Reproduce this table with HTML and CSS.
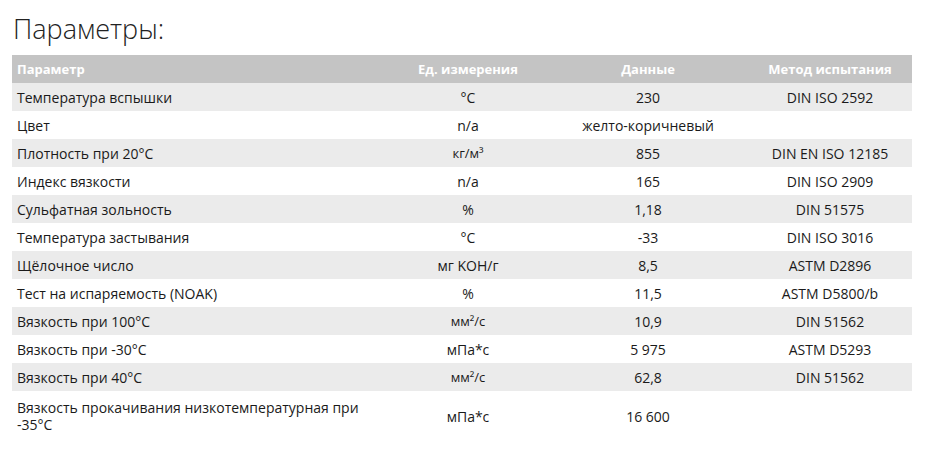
FILE: index.html
```html
<!DOCTYPE html>
<html lang="ru">
<head>
<meta charset="utf-8">
<link rel="stylesheet" href="styles.css">
</head>
<body>
<div class="page">
<h2 class="title">Параметры:</h2>
<table class="params">
<colgroup><col class="c1"><col class="c2"><col class="c3"><col class="c4"></colgroup>
<thead>
<tr><th class="left">Параметр</th><th>Ед. измерения</th><th>Данные</th><th>Метод испытания</th></tr>
</thead>
<tbody>
<tr><td class="left">Температура вспышки</td><td>°C</td><td>230</td><td>DIN ISO 2592</td></tr>
<tr><td class="left">Цвет</td><td>n/a</td><td>желто-коричневый</td><td></td></tr>
<tr><td class="left">Плотность при 20°C</td><td class="sm">кг/м³</td><td>855</td><td>DIN EN ISO 12185</td></tr>
<tr><td class="left">Индекс вязкости</td><td>n/a</td><td>165</td><td>DIN ISO 2909</td></tr>
<tr><td class="left">Сульфатная зольность</td><td>%</td><td>1,18</td><td>DIN 51575</td></tr>
<tr><td class="left">Температура застывания</td><td>°C</td><td>-33</td><td>DIN ISO 3016</td></tr>
<tr><td class="left">Щёлочное число</td><td>мг KOH/г</td><td>8,5</td><td>ASTM D2896</td></tr>
<tr><td class="left">Тест на испаряемость (NOAK)</td><td>%</td><td>11,5</td><td>ASTM D5800/b</td></tr>
<tr><td class="left">Вязкость при 100°C</td><td class="sm">мм²/с</td><td>10,9</td><td>DIN 51562</td></tr>
<tr><td class="left">Вязкость при -30°C</td><td>мПа*с</td><td>5 975</td><td>ASTM D5293</td></tr>
<tr><td class="left">Вязкость при 40°C</td><td class="sm">мм²/с</td><td>62,8</td><td>DIN 51562</td></tr>
<tr><td class="left">Вязкость прокачивания низкотемпературная при -35°C</td><td>мПа*с</td><td>16 600</td><td></td></tr>
</tbody>
</table>
</div>
</body>
</html>
```

FILE: styles.css
```css
html, body {
  margin: 0;
  padding: 0;
  background: #ffffff;
}
body {
  font-family: "Open Sans", "Liberation Sans", sans-serif;
  color: #1a1a1a;
}
.page {
  padding: 10px 20px 0 12px;
}
.title {
  margin: 0 0 8px 1px;
  font-weight: 300;
  font-size: 27px;
  line-height: 37px;
  color: #222222;
}
.params {
  width: 900px;
  border-collapse: collapse;
  table-layout: fixed;
  font-size: 14px;
}
.c1 { width: 376px; }
.c2 { width: 160px; }
.c3 { width: 200px; }
.c4 { width: 164px; }
.params th {
  background: #c4c4c4;
  color: #ffffff;
  font-weight: 700;
  font-size: 13px;
  height: 28px;
  padding: 0 5px;
  text-align: center;
}
.params td {
  height: 28px;
  padding: 0 5px;
  text-align: center;
  line-height: 17px;
}
.params .left {
  text-align: left;
}
.params tbody tr:nth-child(odd) td {
  background: #ebebeb;
}
.params tbody tr:last-child td {
  padding-top: 8px;
  padding-bottom: 6px;
}
.sm {
  font-size: 13px;
}
```
